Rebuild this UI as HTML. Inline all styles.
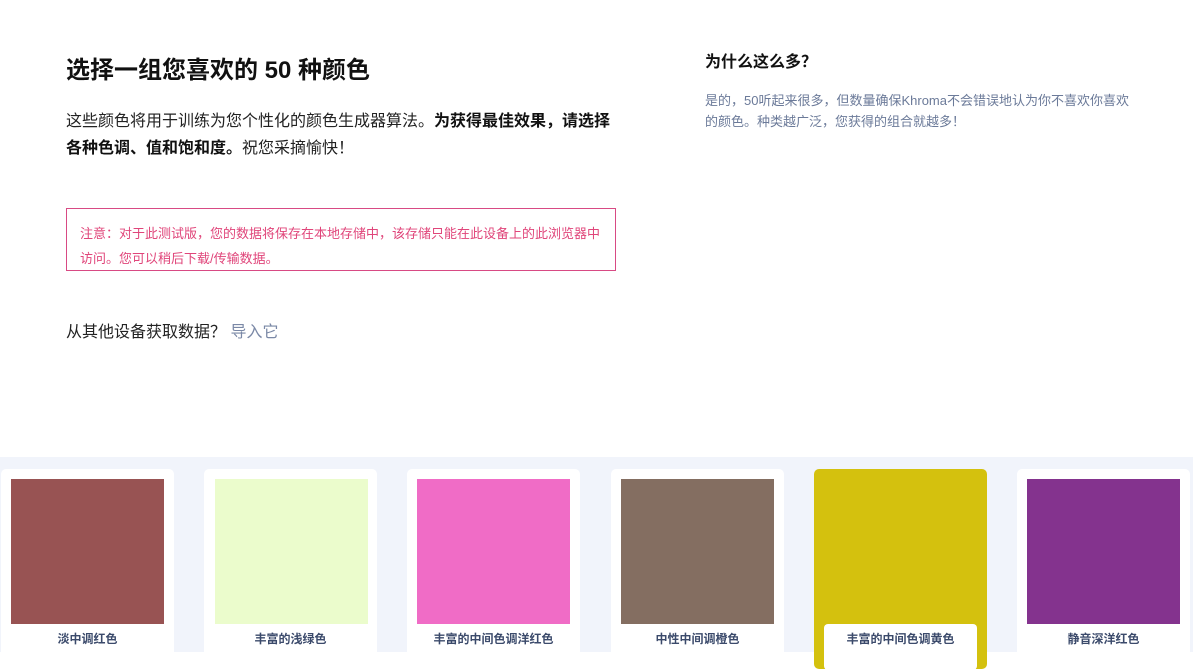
<!DOCTYPE html>
<html><head><meta charset="utf-8"><style>
body{margin:0;width:1193px;height:652px;overflow:hidden;background:#fff;font-family:"Liberation Sans","Noto Sans CJK SC",sans-serif;position:relative}
.a{position:absolute}
h1{position:absolute;left:66px;top:54px;margin:0;font-size:24px;line-height:34px;font-weight:bold;color:#111}
.p{left:66px;top:108px;width:560px;font-size:16px;line-height:27px;color:#222}
.p b{color:#111}
.h2{left:705px;top:52px;font-size:16px;font-weight:bold;color:#111;line-height:22px}
.r{left:705px;top:90px;width:430px;font-size:13px;line-height:21px;color:#6b7a99}
.note{left:66px;top:208px;width:522px;height:37px;padding:12px 13px;border:1px solid #d84a84;color:#e0457a;font-size:13px;line-height:25px}
.imp{left:66px;top:321px;font-size:16px;color:#222;line-height:24px}
.imp span{color:#7a88a6}
.bg{left:0;top:457px;width:1193px;height:195px;background:#f1f4fb}
.card{position:absolute;top:469px;width:173px;height:200px;background:#fff;border-radius:5px}
.sw{position:absolute;left:10px;top:10px;width:153px;height:145px}
.lb{position:absolute;left:0;right:0;top:161px;text-align:center;font-size:12px;font-weight:bold;color:#3b4a6b}
.sel{background:#d4c10e}
.sel .lb{left:10px;right:10px;top:155px;height:40px;padding-top:6px;background:#fff;border-radius:4px}
</style></head><body>
<h1>选择一组您喜欢的 50 种颜色</h1>
<div class="a p">这些颜色将用于训练为您个性化的颜色生成器算法。<b>为获得最佳效果，请选择各种色调、值和饱和度。</b>祝您采摘愉快！</div>
<div class="a h2">为什么这么多？</div>
<div class="a r">是的，50听起来很多，但数量确保Khroma不会错误地认为你不喜欢你喜欢的颜色。种类越广泛，您获得的组合就越多！</div>
<div class="a note">注意：对于此测试版，您的数据将保存在本地存储中，该存储只能在此设备上的此浏览器中访问。您可以稍后下载/传输数据。</div>
<div class="a imp">从其他设备获取数据？ <span>导入它</span></div>
<div class="a bg"></div>
<div class="card" style="left:1px"><div class="sw" style="background:#985353"></div><div class="lb">淡中调红色</div></div>
<div class="card" style="left:204px"><div class="sw" style="left:11px;background:#ebfccc"></div><div class="lb">丰富的浅绿色</div></div>
<div class="card" style="left:407px"><div class="sw" style="background:#f06cc6"></div><div class="lb">丰富的中间色调洋红色</div></div>
<div class="card" style="left:611px"><div class="sw" style="background:#846e61"></div><div class="lb">中性中间调橙色</div></div>
<div class="card sel" style="left:814px"><div class="lb">丰富的中间色调黄色</div></div>
<div class="card" style="left:1017px"><div class="sw" style="background:#84338e"></div><div class="lb">静音深洋红色</div></div>
</body></html>
